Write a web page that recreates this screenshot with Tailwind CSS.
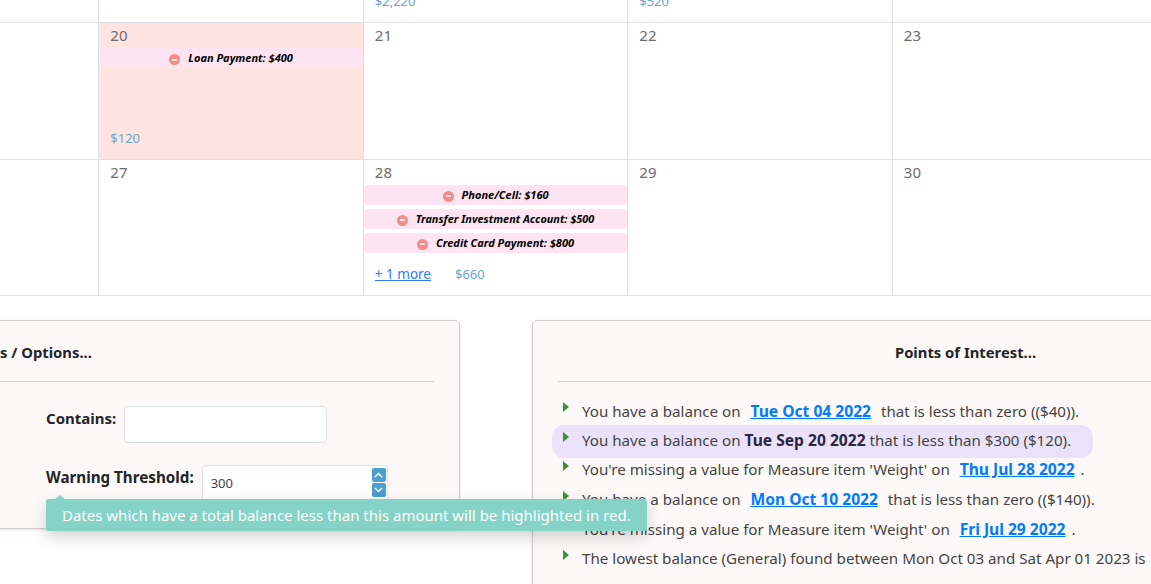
<!DOCTYPE html>
<html lang="en">
<head>
    <meta charset="UTF-8">
    <title>Calendar</title>
    <script src="https://cdn.jsdelivr.net/npm/@tailwindcss/browser@4"></script>
</head>
<body class="bg-white overflow-hidden font-['Noto_Sans','Open_Sans',sans-serif] text-[#444]">
<div class="relative w-[1151px] h-[584px] overflow-hidden">

    <!-- calendar -->
    <div class="grid grid-cols-[264.5px_264.5px_264.5px_264.5px_264.5px_264.5px] grid-rows-[23px_137px_135px] w-[1587px] ml-[-165.2px] border-b border-[#dee2e6]">
        <div class="border-r border-b border-[#dee2e6]"></div>
        <div class="border-r border-b border-[#dee2e6]"></div>
        <div class="border-r border-b border-[#dee2e6] px-[11px] text-[13px] text-[#6ea5cc] leading-none"><span class="block mt-[-5px]">$2,220</span></div>
        <div class="border-r border-b border-[#dee2e6] px-[11px] text-[13px] text-[#6ea5cc] leading-none"><span class="block mt-[-5px]">$520</span></div>
        <div class="border-r border-b border-[#dee2e6]"></div>
        <div class="border-b border-[#dee2e6]"></div>

        <div class="border-r border-b border-[#dee2e6]"></div>
        <div class="border-r border-b border-[#dee2e6] bg-[#fde4e1] flex flex-col">
            <div class="px-[11px] pt-px h-[25px] text-[15px] text-[#6c6c6c]">20</div>
            <div class="h-[20px] rounded-[4px] bg-[#fde4f0] flex items-center justify-center gap-[8px] text-[11px] font-bold italic text-black"><span class="w-[11px] h-[11px] rounded-full bg-[#f58b8b] flex items-center justify-center mt-[3px]"><span class="w-[5px] h-[2px] bg-[#fde4e1]"></span></span><span class="mt-px">Loan Payment: $400</span></div>
            <div class="mt-auto px-[11px] pb-[11px] text-[13px] leading-[20px] text-[#6ea5cc]">$120</div>
        </div>
        <div class="border-r border-b border-[#dee2e6] px-[11px] pt-px text-[15px] text-[#6c6c6c]">21</div>
        <div class="border-r border-b border-[#dee2e6] px-[11px] pt-px text-[15px] text-[#6c6c6c]">22</div>
        <div class="border-r border-b border-[#dee2e6] px-[11px] pt-px text-[15px] text-[#6c6c6c]">23</div>
        <div class="border-b border-[#dee2e6]"></div>

        <div class="border-r border-[#dee2e6]"></div>
        <div class="border-r border-[#dee2e6] px-[11px] pt-px text-[15px] text-[#6c6c6c]">27</div>
        <div class="border-r border-[#dee2e6] flex flex-col">
            <div class="px-[11px] pt-px h-[25px] text-[15px] text-[#6c6c6c]">28</div>
            <div class="flex flex-col gap-[4px]">
                <div class="h-[20px] rounded-[4px] bg-[#fde4f0] flex items-center justify-center gap-[8px] text-[11px] font-bold italic text-black"><span class="w-[11px] h-[11px] rounded-full bg-[#f58b8b] flex items-center justify-center mt-[2px]"><span class="w-[5px] h-[2px] bg-[#fde4e1]"></span></span><span class="mt-px">Phone/Cell: $160</span></div>
                <div class="h-[20px] rounded-[4px] bg-[#fde4f0] flex items-center justify-center gap-[8px] text-[10.9px] font-bold italic text-black"><span class="w-[11px] h-[11px] rounded-full bg-[#f58b8b] flex items-center justify-center mt-[2px]"><span class="w-[5px] h-[2px] bg-[#fde4e1]"></span></span><span class="mt-px">Transfer Investment Account: $500</span></div>
                <div class="h-[20px] rounded-[4px] bg-[#fde4f0] flex items-center justify-center gap-[8px] text-[11px] font-bold italic text-black"><span class="w-[11px] h-[11px] rounded-full bg-[#f58b8b] flex items-center justify-center mt-[2px]"><span class="w-[5px] h-[2px] bg-[#fde4e1]"></span></span><span class="mt-px">Credit Card Payment: $800</span></div>
            </div>
            <div class="flex gap-[24px] px-[11px] mt-[11px] text-[13.5px] leading-[20px]">
                <a class="text-[#2e7bf6] underline">+ 1 more</a>
                <span class="text-[13px] text-[#6ea5cc]">$660</span>
            </div>
        </div>
        <div class="border-r border-[#dee2e6] px-[11px] pt-px text-[15px] text-[#6c6c6c]">29</div>
        <div class="border-r border-[#dee2e6] px-[11px] pt-px text-[15px] text-[#6c6c6c]">30</div>
        <div></div>
    </div>

    <!-- panels -->
    <div class="flex gap-[72px] ml-[-407px] mt-[24px] items-start w-[1806px]">
        <div class="w-[867px] h-[209px] shrink-0 rounded-[5px] border border-[#d3cfcf] bg-[#fdf9f8] shadow-sm px-[25px]">
            <div class="h-[61px] pt-[3px] border-b border-[#d3cfcf] flex items-center justify-center text-[14.8px] font-bold text-[#212529]">Filters / Options...</div>
            <div class="pl-[427px] pt-[24px] text-[15px] font-bold text-[#212529]">
                <div class="flex gap-[8px] items-start">
                    <span class="leading-[25px]">Contains:</span>
                    <div class="w-[203px] h-[37px] rounded-[4px] border border-[#dee2e6] bg-white"></div>
                </div>
                <div class="flex gap-[8px] items-start mt-[22px]">
                    <span class="text-[15.2px] leading-[25px]">Warning Threshold:</span>
                    <div class="w-[186px] h-[37px] rounded-[4px] border border-[#dee2e6] bg-white flex justify-between pl-[8px] pr-[1px] pt-[2px] font-normal text-[13px] text-[#444]">
                        <span class="leading-[30px]">300</span>
                        <div class="flex flex-col gap-px">
                            <span class="w-[14px] h-[14px] rounded-[2px] bg-[#4a9fce] flex items-center justify-center"><svg width="9" height="6" viewBox="0 0 9 6" fill="none" stroke="white" stroke-width="1.5"><path d="M1 5l3.5-3.5L8 5"/></svg></span>
                            <span class="w-[14px] h-[14px] rounded-[2px] bg-[#4a9fce] flex items-center justify-center"><svg width="9" height="6" viewBox="0 0 9 6" fill="none" stroke="white" stroke-width="1.5"><path d="M1 1l3.5 3.5L8 1"/></svg></span>
                        </div>
                    </div>
                </div>
            </div>
        </div>

        <div class="w-[867px] h-[300px] shrink-0 rounded-[5px] border border-[#d3cfcf] bg-[#fdf9f8] shadow-sm px-[25px]">
            <div class="h-[61px] pt-[3px] border-b border-[#d3cfcf] flex items-center justify-center text-[14.8px] font-bold text-[#212529]">Points of Interest...</div>
            <ul class="mt-[15px] text-[15.15px] leading-[20px] text-[#444] whitespace-nowrap">
                <li class="flex h-[29.5px] items-center pl-[5px] gap-[13px]"><svg class="mt-[-9px] shrink-0" width="6" height="10" viewBox="0 0 6 10"><path d="M0 0l6 5-6 5z" fill="#3f8f3f"/></svg><span class="mt-[-2px]">You have a balance on <a class="text-[15.6px] font-bold text-[#007bff] underline mx-[6px]">Tue Oct 04 2022</a> that is less than zero (($40)).</span></li>
                <li class="flex h-[33px] my-[-2px] items-center gap-[13px] rounded-[12px] bg-[#e9e2f9] w-[541px] ml-[-6px] pl-[11px]"><svg class="mt-[-9px] shrink-0" width="6" height="10" viewBox="0 0 6 10"><path d="M0 0l6 5-6 5z" fill="#3f8f3f"/></svg><span class="mt-[-2px]">You have a balance on <b class="text-[15.6px] text-[#2d2640]">Tue Sep 20 2022</b> that is less than $300 ($120).</span></li>
                <li class="flex h-[29.5px] items-center pl-[5px] gap-[13px]"><svg class="mt-[-9px] shrink-0" width="6" height="10" viewBox="0 0 6 10"><path d="M0 0l6 5-6 5z" fill="#3f8f3f"/></svg><span class="mt-[-2px]">You're missing a value for Measure item 'Weight' on <a class="text-[15.6px] font-bold text-[#007bff] underline mx-[6px]">Thu Jul 28 2022</a>.</span></li>
                <li class="flex h-[30px] items-center pl-[5px] gap-[13px]"><svg class="mt-[-9px] shrink-0" width="6" height="10" viewBox="0 0 6 10"><path d="M0 0l6 5-6 5z" fill="#3f8f3f"/></svg><span class="mt-[-2px]">You have a balance on <a class="text-[15.6px] font-bold text-[#007bff] underline mx-[6px]">Mon Oct 10 2022</a> that is less than zero (($140)).</span></li>
                <li class="flex h-[29.5px] items-center pl-[5px] gap-[13px]"><svg class="mt-[-9px] shrink-0" width="6" height="10" viewBox="0 0 6 10"><path d="M0 0l6 5-6 5z" fill="#3f8f3f"/></svg><span class="mt-[-2px]">You're missing a value for Measure item 'Weight' on <a class="text-[15.6px] font-bold text-[#007bff] underline mx-[6px]">Fri Jul 29 2022</a>.</span></li>
                <li class="flex h-[29.5px] items-center pl-[5px] gap-[13px]"><svg class="mt-[-9px] shrink-0" width="6" height="10" viewBox="0 0 6 10"><path d="M0 0l6 5-6 5z" fill="#3f8f3f"/></svg><span class="mt-[-2px]">The lowest balance (General) found between Mon Oct 03 and Sat Apr 01 2023 is</span></li>
            </ul>
        </div>
    </div>

    <!-- tooltip -->
    <div class="absolute left-[46px] top-[499px] h-[32px] w-[601px] rounded-[3px] bg-[#85d2c6] text-white text-[15px] leading-[32px] pl-[16px] shadow-[0_6px_16px_rgba(0,0,0,0.18)] whitespace-nowrap">
        <span class="absolute left-[9px] top-[-4px] w-0 h-0 border-x-[5px] border-x-transparent border-b-[4px] border-b-[#85d2c6]"></span>
        Dates which have a total balance less than this amount will be highlighted in red.
    </div>
</div>
</body>
</html>
